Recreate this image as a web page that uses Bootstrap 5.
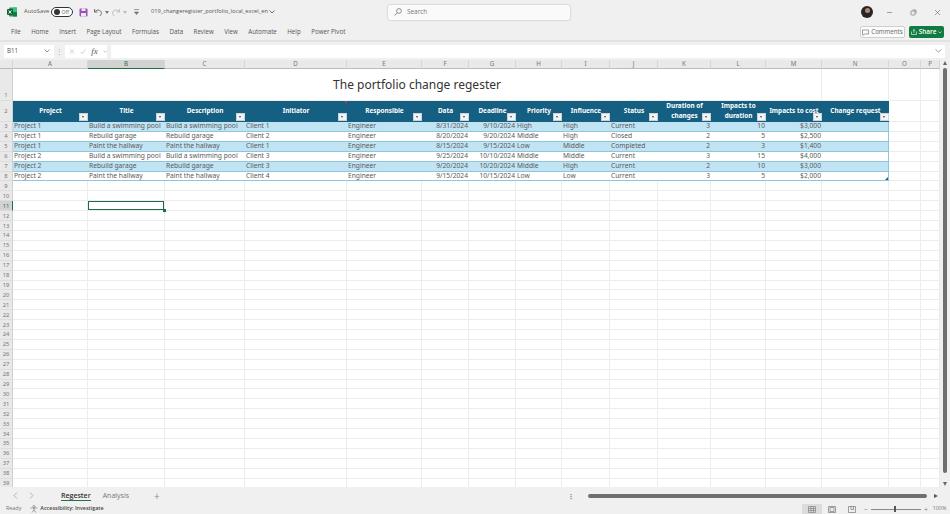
<!DOCTYPE html>
<html lang="en">
<head>
<meta charset="UTF-8" />
<meta name="viewport" content="width=device-width, initial-scale=1" />
<title>Excel - change register</title>
<link href="https://cdn.jsdelivr.net/npm/bootstrap@5.3.0/dist/css/bootstrap.min.css" rel="stylesheet" />
<style>
html, body { height: 100%; overflow: hidden; }
body { background: #f0f0f0; font-family: "Open Sans", "Liberation Sans", sans-serif; font-size: 6.6px; color: #555; line-height: 1; }
.app { height: 514px; width: 950px; }
.titlebar { height: 24px; padding-left: 7px; }
.autosave { margin-left: 7px; width: 27px; font-size: 5.8px; }
.toggle { width: 22px; height: 10px; border: 1px solid #333; border-radius: 5px; padding-left: 1.5px; background: #fff; gap: 2px; font-size: 5px; margin-right: 6px; }
.toggle i { width: 6px; height: 6px; background: #333; border-radius: 50%; display: block; flex: none; }
.qat svg { flex: none; }
.qat .g2 { margin-left: 2px; }
.qat .g5 { margin-left: 5px; }
.qat .g7 { margin-left: 7px; }
.filename { margin-left: 12px; width: 237px; color: #555; font-size: 5.7px; }
.searchbox { width: 182px; height: 15px; background: #fafafa; border-radius: 2px; box-shadow: 0 0 2px rgba(0,0,0,.3); padding-left: 6px; gap: 5px; color: #777; font-size: 6.4px; }
.avatar { width: 12px; height: 12px; border-radius: 50%; background: #2a2522; position: relative; overflow: hidden; margin-left: 291px; flex: none; }
.avatar::after { content: ""; position: absolute; left: 3.5px; top: 2px; width: 5px; height: 5px; border-radius: 50%; background: #a88b78; }
.winbtn { width: 24px; text-align: center; }
.menubar { height: 16px; padding-left: 11px; font-size: 6.2px; color: #555; }
.menubar span { margin-right: 10.5px; }
.cmt-btn { width: 45px; height: 12px; background: #fbfbfb; border: 1px solid #cfcfcf; border-radius: 2px; gap: 2px; color: #666; font-size: 6.2px; }
.share-btn { width: 35px; height: 12px; background: #107c41; border-radius: 2px; color: #fff; gap: 2px; font-size: 6.4px; font-weight: 600; margin-left: 4px; margin-right: 6px; }
.formulabar { height: 20px; border-top: 2px solid #e2e2e2; padding: 0 5px 0 4px; }
.namebox { width: 50px; height: 13px; background: #fff; padding: 0 4px 0 3px; font-size: 6.2px; }
.fxbox { width: 42px; height: 13px; background: #fff; gap: 5px; padding-left: 4px; color: #aaa; }
.fxbox em { font-family: "Liberation Serif", serif; font-size: 9px; color: #555; }
.sepdots { width: 11px; text-align: center; color: #aaa; font-size: 7px; }
.inputbox { height: 13px; background: #fff; margin-left: 4px; padding-right: 3px; }
.sheetarea { height: 427px; }
.sheetwrap { width: 940px; height: 427px; overflow: hidden; background: #fff; }
.grid { table-layout: fixed; border-collapse: separate; border-spacing: 0; width: 927px; font-size: 6.7px; font-family: "Noto Sans", "Liberation Sans", sans-serif; color: #5a5a5a; }
.grid td, .grid th { padding: 0 1px; border-right: 1px solid #ececec; border-bottom: 1px solid #ececec; white-space: nowrap; overflow: hidden; height: 9.92px; line-height: 8px; position: relative; }
.grid .colhead th { height: 9px; background: #e9e9e9; text-align: center; font-weight: 400; color: #777; font-size: 6.2px; border-right: 1px solid #d6d6d6; border-bottom: 1px solid #bbb; }
.grid .colhead th.on { background: #d2d2d2; color: #2c6e4c; border-bottom: 1px solid #217346; }
.grid .rowno { background: #e9e9e9; text-align: center; color: #777; font-size: 5.8px; font-weight: 400; padding: 0; border-right: 1px solid #d0d0d0; border-bottom: 1px solid #ddd; }
.grid .rowno.on { background: #d2d2d2; color: #2c6e4c; border-right: 1px solid #217346; }
.grid tr.first td { height: 32px; }
.grid tr.first .rowno { height: 32px; vertical-align: bottom; padding-bottom: 1px; }
.grid td.doc-title { font-size: 12px; color: #333; text-align: center; vertical-align: top; padding-top: 8px; line-height: 16px; overflow: visible; }
.grid tr.heads td.hcell { height: 20px; background: #156082; color: #fff; font-weight: 700; text-align: center; font-size: 6.4px; line-height: 10px; border-right: 0; border-bottom: 0; white-space: normal; vertical-align: middle; padding-bottom: 1px; overflow: visible; }
.grid tr.heads td span { display: block; white-space: nowrap; }
.flt { position: absolute; right: 0; bottom: 1px; width: 9px; height: 8px; background: #f4f4f4; border: 1px solid #c8d4da; z-index: 2; }
.flt::after { content: ""; position: absolute; left: 2px; top: 2px; border: 1.5px solid transparent; border-top: 2px solid #444; border-bottom: 0; }
.cmt-mark { position: absolute; right: 0; top: 0; border-top: 3px solid #c8323c; border-left: 3px solid transparent; }
.grid tr.tb td.dcell { border-right: 0; border-bottom: 1px solid #8fc6dc; }
.grid tr.tb.band td.dcell { background: #c1e4f5; }
.grid tr.tb td.num { text-align: right; }
.grid tr.tb td.lastc { border-right: 1px solid #8fc6dc; }
.grid tr.tb td.lastc.rz { overflow: visible; }
.grid tr.tb td.lastc.rz::after { content: ""; position: absolute; right: 0; bottom: 0; border-bottom: 3px solid #1f5f8a; border-left: 3px solid transparent; }
.grid td.sel { box-shadow: inset 0 0 0 1px #1b6e43; overflow: visible; }
.grid td.sel::after { content: ""; position: absolute; right: -2px; bottom: -2px; width: 3px; height: 3px; background: #1b6e43; z-index: 3; }
.vscroll { width: 10px; height: 427px; position: relative; }
.vthumb { position: absolute; left: 3px; top: 8px; width: 4px; height: 405px; background: #6f6f6f; border-radius: 2px; }
.arr { position: absolute; left: 2.5px; border: 2.5px solid transparent; }
.arr.up { top: 1px; border-bottom: 4px solid #666; border-top: 0; }
.arr.down { bottom: 1px; border-top: 4px solid #666; border-bottom: 0; }
.tabbar { height: 17px; font-size: 7px; color: #777; }
.tabnav { width: 61px; padding-left: 13px; gap: 11px; color: #999; }
.tabnow { color: #333; font-weight: 600; border-bottom: 1.5px solid #217346; padding: 2px 0 1.5px; font-size: 7px; }
.tabother { margin-left: 12px; }
.tabadd { margin-left: 25px; font-size: 10px; color: #888; }
.tabdots { margin-left: 408px; width: 20px; color: #666; font-size: 6px; font-weight: 700; }
.hthumb { width: 339px; height: 4px; background: #6f6f6f; border-radius: 2px; }
.harrow { margin-left: 7px; border: 2.5px solid transparent; border-left: 4px solid #555; border-right: 0; }
.statusbar { height: 10px; font-size: 5.4px; padding-left: 6px; color: #777; }
.acc { margin-left: 9px; gap: 2px; color: #444; font-weight: 600; }
.viewbtn { width: 20px; height: 10px; }
.viewbtn.cur { background: #dcdcdc; }
.zoomer { margin-left: 1px; width: 66px; position: relative; height: 10px; padding: 0 1px; font-size: 7px; color: #888; }
.zoomer::before { content: ""; position: absolute; left: 8px; right: 8px; top: 4.5px; height: 1px; background: #888; }
.zoomer::after { content: ""; position: absolute; left: 31px; top: 2px; width: 2px; height: 6px; background: #555; }
.zoompct { width: 21px; text-align: center; }
</style>
</head>
<body>
<div class="app d-flex flex-column">

  <div class="titlebar d-flex align-items-center">
    <svg width="10" height="10" viewBox="0 0 10 10"><rect x="2" y="0.5" width="8" height="9" rx="1" fill="#21a366"/><rect x="6" y="0.5" width="4" height="4.5" fill="#33c481"/><rect x="6" y="5" width="4" height="4.5" fill="#107c41"/><rect x="0" y="2" width="6" height="6" rx="1" fill="#185c37"/><path d="M1.6 3.4 4.4 6.6M4.4 3.4 1.6 6.6" stroke="#fff" stroke-width=".9"/></svg>
    <span class="autosave">AutoSave</span>
    <span class="toggle d-flex align-items-center"><i></i>Off</span>
    <div class="qat d-flex align-items-center">
      <svg width="9" height="9" viewBox="0 0 9 9"><rect x=".5" y=".5" width="8" height="8" rx="1" fill="#9a4fb5"/><rect x="2.5" y=".5" width="4" height="2.5" fill="#efe6f3"/><rect x="2" y="5" width="5" height="3.5" fill="#efe6f3"/></svg>
      <svg class="g5" width="10" height="9" viewBox="0 0 10 9" fill="none" stroke="#666" stroke-width=".9"><path d="M1.5 1v3h3"/><path d="M1.5 4C3 1.8 6 1.5 7.6 3c1.400 1.400 1 3.600-.8 5"/></svg>
      <svg class="g2" width="4" height="3" viewBox="0 0 4 3"><path d="M0 0h4L2 3z" fill="#777"/></svg>
      <svg class="g2" width="10" height="9" viewBox="0 0 10 9" fill="none" stroke="#bbb" stroke-width=".9"><path d="M8.500 1v3h-3"/><path d="M8.500 4C7 1.800 4 1.500 2.400 3 1 4.400 1.400 6.600 3.200 8"/></svg>
      <svg class="g2" width="4" height="3" viewBox="0 0 4 3"><path d="M0 0h4L2 3z" fill="#bbb"/></svg>
      <svg class="g7" width="5" height="6" viewBox="0 0 5 6"><path d="M0 .5h5M.5 3h4L2.500 5.500z" stroke="#777" stroke-width=".7" fill="#777"/></svg>
    </div>
    <span class="filename">019_changeregister_portfolio_local_excel_en
      <svg width="6" height="4" viewBox="0 0 6 4" fill="none" stroke="#555" stroke-width=".8"><path d="M.5.5 3 3 5.500.5"/></svg></span>
    <div class="searchbox d-flex align-items-center">
      <svg width="8" height="8" viewBox="0 0 8 8" fill="none" stroke="#777" stroke-width=".8"><circle cx="5" cy="3" r="2.400"/><path d="M3.200 4.800.6 7.400"/></svg>
      <span>Search</span>
    </div>
    <div class="avatar"></div>
    <div class="winbtn ms-1"><svg width="7" height="7" viewBox="0 0 7 7"><path d="M1 3.500h5" stroke="#777" stroke-width=".7"/></svg></div>
    <div class="winbtn"><svg width="7" height="7" viewBox="0 0 7 7" fill="none" stroke="#777" stroke-width=".7"><rect x="1" y="2" width="4" height="4" rx=".6"/><path d="M2.500 1h3.500v3.500"/></svg></div>
    <div class="winbtn"><svg width="7" height="7" viewBox="0 0 7 7" stroke="#777" stroke-width=".7"><path d="M1 1l5 5M6 1 1 6"/></svg></div>
  </div>

  <div class="menubar d-flex align-items-center">
    <span>File</span><span>Home</span><span>Insert</span><span>Page Layout</span><span>Formulas</span><span>Data</span><span>Review</span><span>View</span><span>Automate</span><span>Help</span><span>Power Pivot</span>
    <div class="cmt-btn d-flex align-items-center justify-content-center ms-auto">
      <svg width="7" height="7" viewBox="0 0 7 7" fill="none" stroke="#666" stroke-width=".6"><path d="M.5 1h6v4H2.500L1 6.500V5H.5z"/></svg>Comments
    </div>
    <div class="share-btn d-flex align-items-center justify-content-center">
      <svg width="6" height="6" viewBox="0 0 6 6" fill="none" stroke="#fff" stroke-width=".6"><path d="M.5 2.500v3h5v-3M3 4V.5M1.800 1.600 3 .5l1.200 1.100"/></svg>Share
      <svg width="4" height="3" viewBox="0 0 4 3" fill="none" stroke="#fff" stroke-width=".6"><path d="M.5.5 2 2 3.500.5"/></svg>
    </div>
  </div>

  <div class="formulabar d-flex align-items-center">
    <div class="namebox d-flex align-items-center justify-content-between">B11
      <svg width="6" height="4" viewBox="0 0 6 4" fill="none" stroke="#666" stroke-width=".7"><path d="M.5.5 3 3 5.500.5"/></svg></div>
    <span class="sepdots">⋮</span>
    <div class="fxbox d-flex align-items-center">
      <svg width="7" height="7" viewBox="0 0 7 7" stroke="#bbb" stroke-width=".8"><path d="M1 1l5 5M6 1 1 6"/></svg>
      <svg width="7" height="7" viewBox="0 0 7 7" fill="none" stroke="#bbb" stroke-width=".8"><path d="M.5 4 2.500 6 6.500 1"/></svg>
      <em>fx</em>
      <svg width="5" height="3" viewBox="0 0 5 3" fill="none" stroke="#999" stroke-width=".6"><path d="M.5.5 2.500 2.500 4.500.5"/></svg>
    </div>
    <div class="inputbox flex-grow-1 d-flex align-items-center justify-content-end">
      <svg width="7" height="4" viewBox="0 0 7 4" fill="none" stroke="#777" stroke-width=".7"><path d="M.5.500 3.500 3 6.500.5"/></svg>
    </div>
  </div>

  <div class="sheetarea d-flex">
    <div class="sheetwrap"><table class="grid" id="grid"></table></div>
    <div class="vscroll"><div class="arr up"></div><div class="vthumb"></div><div class="arr down"></div></div>
  </div>

  <div class="tabbar d-flex align-items-center">
    <div class="tabnav d-flex">
      <svg width="5" height="7" viewBox="0 0 5 7" fill="none" stroke="#999" stroke-width=".7"><path d="M4 .5 1 3.500 4 6.500"/></svg>
      <svg width="5" height="7" viewBox="0 0 5 7" fill="none" stroke="#999" stroke-width=".7"><path d="M1 .5 4 3.500 1 6.500"/></svg>
    </div>
    <span class="tabnow">Regester</span>
    <span class="tabother">Analysis</span>
    <span class="tabadd">+</span>
    <span class="tabdots">⋮</span>
    <div class="hthumb"></div>
    <div class="harrow"></div>
  </div>

  <div class="statusbar d-flex align-items-center">
    <span>Ready</span>
    <span class="acc d-flex align-items-center">
      <svg width="8" height="8" viewBox="0 0 8 8" fill="none" stroke="#666" stroke-width=".6"><circle cx="4" cy="1.500" r="1"/><path d="M.5 3h7M4 3v2M4 5 2 7.500M4 5l2 2.500"/></svg>
      Accessibility: Investigate</span>
    <div class="d-flex align-items-center ms-auto">
      <div class="viewbtn cur d-flex align-items-center justify-content-center"><svg width="8" height="7" viewBox="0 0 8 7" fill="none" stroke="#666" stroke-width=".5"><path d="M.5.5h7v6h-7zM.5 2.500h7M.5 4.500h7M3 .5v6M5.500.5v6"/></svg></div>
      <div class="viewbtn d-flex align-items-center justify-content-center"><svg width="8" height="7" viewBox="0 0 8 7" fill="none" stroke="#666" stroke-width=".6"><path d="M.5.5h7v6h-7zM2 1.500h4v4H2z"/></svg></div>
      <div class="viewbtn d-flex align-items-center justify-content-center"><svg width="8" height="7" viewBox="0 0 8 7" fill="none" stroke="#666" stroke-width=".6"><path d="M.5.5h7v6h-7zM3 .5v3h2.500V.5"/></svg></div>
      <div class="zoomer d-flex align-items-center justify-content-between"><span>−</span><span>+</span></div>
      <div class="zoompct">100%</div>
    </div>
  </div>
</div>

<script>
  const widths = [13, 75, 77, 80, 102, 75, 47, 47, 46, 48, 48, 53, 55, 56, 67, 32, 19];
  const letters = ' ABCDEFGHIJKLMNOP'.split('');
  const heads = ['Project', 'Title', 'Description', 'Initiator', 'Responsible', 'Data', 'Deadline', 'Priority', 'Influence', 'Status', 'Duration of<br>changes', 'Impacts to<br>duration', 'Impacts to cost', 'Change request'];
  const data = [
    ['Project 1', 'Build a swimming pool', 'Build a swimming pool', 'Client 1', 'Engineer', '8/31/2024', '9/10/2024', 'High', 'High', 'Current', '3', '10', '$3,000', ''],
    ['Project 1', 'Rebuild garage', 'Rebuild garage', 'Client 2', 'Engineer', '8/20/2024', '9/20/2024', 'Middle', 'High', 'Closed', '2', '5', '$2,500', ''],
    ['Project 1', 'Paint the hallway', 'Paint the hallway', 'Client 1', 'Engineer', '8/15/2024', '9/15/2024', 'Low', 'Middle', 'Completed', '2', '3', '$1,400', ''],
    ['Project 2', 'Build a swimming pool', 'Build a swimming pool', 'Client 3', 'Engineer', '9/25/2024', '10/10/2024', 'Middle', 'Middle', 'Current', '3', '15', '$4,000', ''],
    ['Project 2', 'Rebuild garage', 'Rebuild garage', 'Client 3', 'Engineer', '9/20/2024', '10/20/2024', 'Middle', 'High', 'Current', '2', '10', '$3,000', ''],
    ['Project 2', 'Paint the hallway', 'Paint the hallway', 'Client 4', 'Engineer', '9/15/2024', '10/15/2024', 'Low', 'Low', 'Current', '3', '5', '$2,000', '']
  ];
  const numCols = [5, 6, 10, 11, 12];

  let html = '<colgroup>' + widths.map(w => `<col style="width:${w}px">`).join('') + '</colgroup>';
  html += '<tr class="colhead">' + letters.map((l, i) => `<th class="${i === 2 ? 'on' : ''}">${l}</th>`).join('') + '</tr>';
  html += '<tr class="first"><th class="rowno">1</th><td colspan="13" class="doc-title">The portfolio change regester</td><td></td><td></td><td></td></tr>';
  html += '<tr class="heads"><th class="rowno">2</th>' + heads.map((h, i) =>
    `<td class="hcell"><span>${h}</span><div class="flt"></div>${i === 3 ? '<div class="cmt-mark"></div>' : ''}</td>`).join('') + '<td></td><td></td></tr>';
  data.forEach((row, r) => {
    html += `<tr class="tb ${r % 2 === 0 ? 'band' : ''}"><th class="rowno">${r + 3}</th>`;
    row.forEach((c, i) => {
      let cls = 'dcell' + (numCols.includes(i) ? ' num' : '');
      if (i === 13) cls += ' lastc' + (r === 5 ? ' rz' : '');
      html += `<td class="${cls}">${c}</td>`;
    });
    html += '<td></td><td></td></tr>';
  });
  for (let r = 9; r <= 39; r++) {
    html += `<tr><th class="rowno ${r === 11 ? 'on' : ''}">${r}</th>`;
    for (let c = 0; c < 16; c++) html += `<td class="${r === 11 && c === 1 ? 'sel' : ''}"></td>`;
    html += '</tr>';
  }
  document.getElementById('grid').innerHTML = html;
</script>
<script src="https://cdn.jsdelivr.net/npm/bootstrap@5.3.0/dist/js/bootstrap.bundle.min.js"></script>
</body>
</html>
